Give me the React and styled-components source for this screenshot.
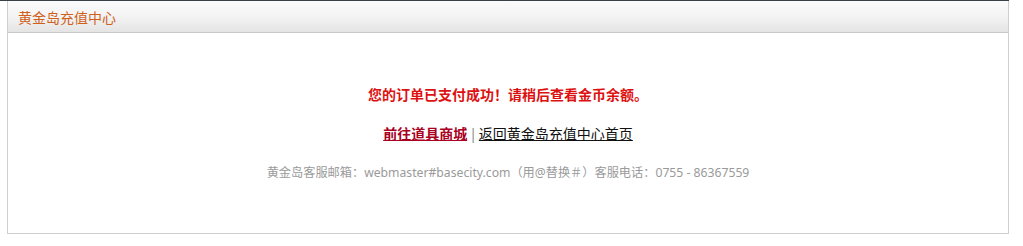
import React from 'react';
import styled, { createGlobalStyle } from 'styled-components';

const GlobalStyle = createGlobalStyle`
  html, body {
    margin: 0;
    padding: 0;
    background: #fff;
  }
  body {
    font-family: "Noto Sans", "Noto Sans CJK SC", sans-serif;
  }
`;

const StyledPage = styled.div`
  width: 1009px;
  border-top: 1px solid #3b4046;
  padding-left: 7px;
  box-sizing: border-box;
`;

const StyledPanel = styled.div`
  width: 1002px;
  border: 1px solid #cfcfcf;
  border-top: none;
  box-sizing: border-box;
`;

const StyledHeader = styled.div`
  height: 31px;
  display: flex;
  align-items: center;
  padding-left: 10px;
  background: linear-gradient(to bottom, #fbfbfb 0%, #f3f3f3 50%, #e4e4e4 100%);
  border-bottom: 1px solid #c9c9c9;
`;

const StyledTitle = styled.h2`
  margin: 0;
  font-size: 14px;
  font-weight: normal;
  color: #d0611c;
`;

const StyledBody = styled.div`
  height: 200px;
  display: flex;
  flex-direction: column;
  align-items: center;
  padding-top: 52px;
  box-sizing: border-box;
  gap: 19px;
`;

const StyledMessage = styled.p`
  margin: 0;
  line-height: 20px;
  font-size: 14px;
  font-weight: bold;
  color: #dd1111;
`;

const StyledLinks = styled.div`
  display: flex;
  align-items: center;
  gap: 2px;
  line-height: 20px;
  font-size: 14px;
`;

const StyledLink = styled.a`
  color: ${({ $primary }) => ($primary ? '#a8001e' : '#111')};
  font-weight: ${({ $primary }) => ($primary ? 'bold' : 'normal')};
  text-decoration: underline;
  cursor: pointer;
`;

const StyledSep = styled.span`
  color: #888;
`;

const StyledFooter = styled.p`
  margin: 0;
  line-height: 20px;
  font-size: 12.2px;
  color: #9a9a9a;
`;

const App = () => (
  <>
    <GlobalStyle />
    <StyledPage>
      <StyledPanel>
        <StyledHeader>
          <StyledTitle>黄金岛充值中心</StyledTitle>
        </StyledHeader>
        <StyledBody>
          <StyledMessage>您的订单已支付成功！请稍后查看金币余额。</StyledMessage>
          <StyledLinks>
            <StyledLink $primary>前往道具商城</StyledLink>
            <StyledSep>|</StyledSep>
            <StyledLink>返回黄金岛充值中心首页</StyledLink>
          </StyledLinks>
          <StyledFooter>
            黄金岛客服邮箱：webmaster#basecity.com（用@替换＃）客服电话：0755 - 86367559
          </StyledFooter>
        </StyledBody>
      </StyledPanel>
    </StyledPage>
  </>
);

export default App;
